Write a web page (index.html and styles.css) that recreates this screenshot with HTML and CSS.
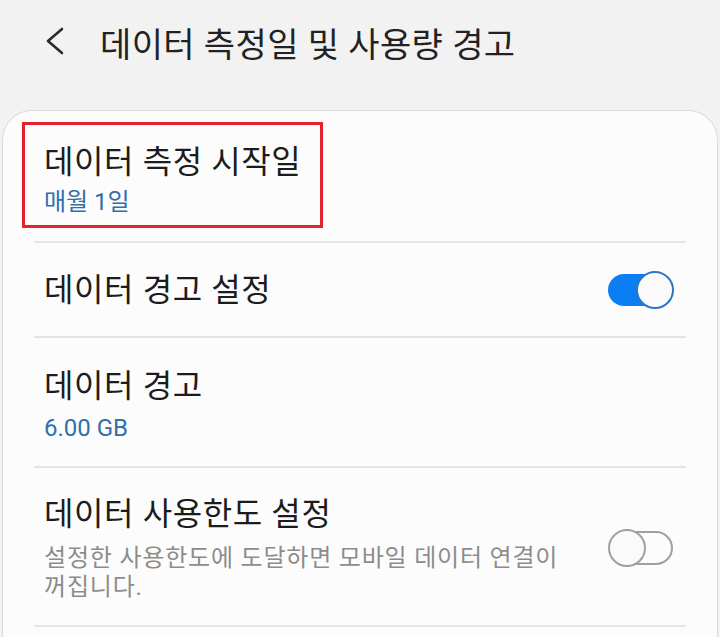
FILE: index.html
```html
<!DOCTYPE html>
<html lang="ko">
<head>
    <meta charset="UTF-8">
    <meta name="viewport" content="width=device-width, initial-scale=1.0">
    <title>데이터 측정일 및 사용량 경고</title>
    <link rel="stylesheet" href="styles.css">
</head>
<body>
    <!-- Top bar -->
    <div class="header">
        <svg class="back" width="20" height="28" viewBox="0 0 20 28">
            <polyline points="17,2 3,14 17,26" fill="none" stroke="#2b2b2b" stroke-width="2.6" stroke-linecap="round" stroke-linejoin="round"/>
        </svg>
        <h1>데이터 측정일 및 사용량 경고</h1>
    </div>

    <!-- Settings card -->
    <div class="card">
        <div class="row row-first">
            <div class="highlight">
                <div class="title">데이터 측정 시작일</div>
                <div class="value">매월 1일</div>
            </div>
        </div>

        <div class="row row-switch">
            <div class="title">데이터 경고 설정</div>
            <div class="toggle on">
                <span class="track"></span>
                <span class="thumb"></span>
            </div>
        </div>

        <div class="row row-value">
            <div class="title">데이터 경고</div>
            <div class="value">6.00 GB</div>
        </div>

        <div class="row row-switch row-desc">
            <div class="text">
                <div class="title">데이터 사용한도 설정</div>
                <div class="desc">설정한 사용한도에 도달하면 모바일 데이터 연결이 꺼집니다.</div>
            </div>
            <div class="toggle off">
                <span class="track"></span>
                <span class="thumb"></span>
            </div>
        </div>
    </div>
</body>
</html>
```

FILE: styles.css
```css
body {
    margin: 0;
    background-color: #f2f2f2;
    font-family: "Roboto", "Noto Sans CJK KR", sans-serif;
    color: #1c1c1c;
}
.header {
    height: 110px;
    display: flex;
    align-items: flex-start;
    padding-left: 45px;
}
.back {
    margin-top: 27px;
    flex-shrink: 0;
}
.header h1 {
    margin: 22px 0 0 35px;
    font-size: 34px;
    font-weight: 400;
    line-height: 46px;
    letter-spacing: 0.4px;
    color: #222;
}
.card {
    margin: 0 2px;
    height: 527px;
    box-sizing: border-box;
    background-color: #fcfcfc;
    border: 1px solid #dcdcdc;
    border-bottom: none;
    border-radius: 30px 30px 0 0;
}
.row {
    margin: 0 31px 0 31px;
    padding: 0 12px 0 10px;
    border-bottom: 2px solid #e4e4e4;
}
.title {
    font-size: 32px;
    line-height: 40px;
    letter-spacing: 0.6px;
    color: #1c1c1c;
}
.value {
    font-size: 24px;
    line-height: 32px;
    color: #2f6fae;
}
.row-first {
    padding-top: 11px;
    padding-bottom: 13px;
}
.highlight {
    display: inline-block;
    margin-left: -22px;
    padding: 17px 19px 7px 19px;
    border: 3px solid #e3222b;
}
.highlight .value {
    margin-top: 4px;
}
.row-switch {
    display: flex;
    align-items: center;
    justify-content: space-between;
    height: 93px;
}
.row-value {
    padding-top: 28px;
    padding-bottom: 22px;
}
.row-value .value {
    margin-top: 6px;
}
.row-desc {
    height: auto;
    padding-top: 26px;
    padding-bottom: 23px;
}
.text {
    width: 530px;
}
.desc {
    margin-top: 10px;
    font-size: 24px;
    line-height: 29px;
    letter-spacing: 0.8px;
    color: #8c8c8c;
}
.toggle {
    position: relative;
    width: 66px;
    height: 38px;
    flex-shrink: 0;
}
.toggle .track,
.toggle .thumb {
    position: absolute;
    box-sizing: border-box;
}
.toggle .thumb {
    top: 0;
    width: 38px;
    height: 38px;
    border-radius: 50%;
    background-color: #fafafa;
}
.toggle.on .track {
    left: 0;
    top: 3px;
    width: 58px;
    height: 32px;
    border-radius: 16px;
    background-color: #0b7ef3;
}
.toggle.on .thumb {
    right: 0;
    border: 2px solid #2f76c2;
}
.toggle.off .track {
    left: 2px;
    top: 2px;
    width: 63px;
    height: 34px;
    border-radius: 17px;
    border: 2px solid #a0a0a0;
}
.toggle.off .thumb {
    left: 0;
    border: 2px solid #a0a0a0;
}
```
